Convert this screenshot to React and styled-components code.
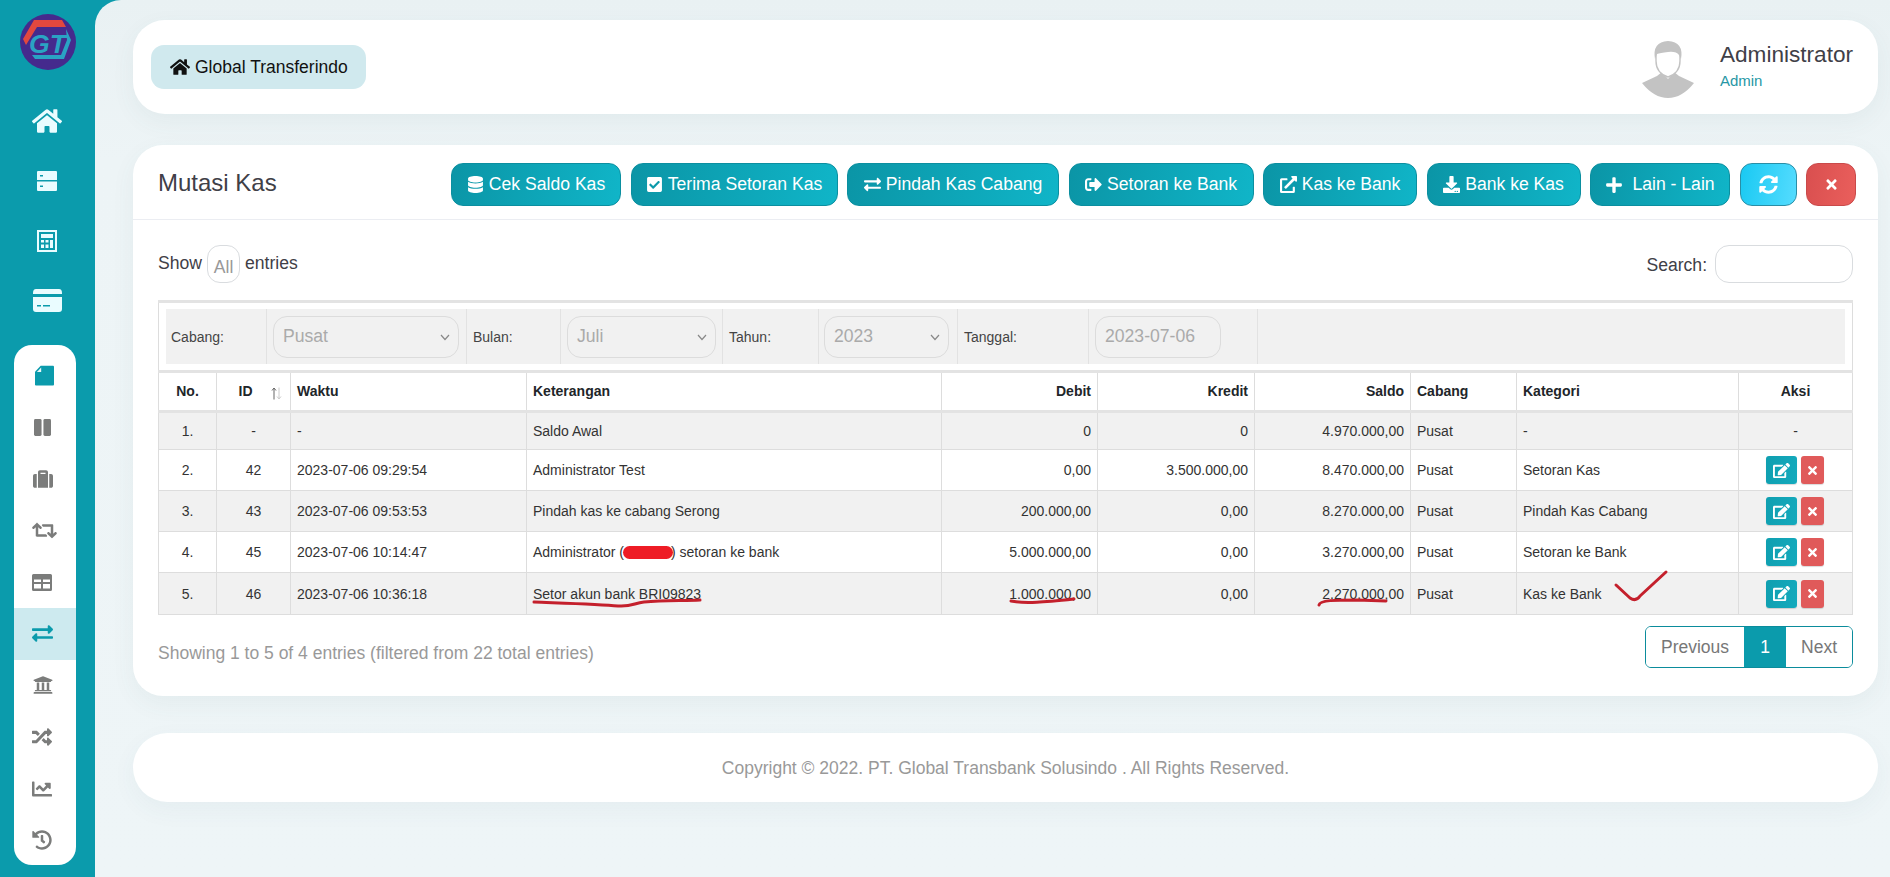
import React from "react";
import styled, { createGlobalStyle } from "styled-components";
import {
  FaHome, FaSuitcase, FaRetweet, FaExchangeAlt, FaUniversity, FaRandom, FaChartLine, FaHistory,
  FaDatabase, FaCheckSquare, FaSignOutAlt, FaExternalLinkAlt, FaDownload, FaPlus, FaSyncAlt, FaTimes, FaEdit,
} from "react-icons/fa";

const Global = createGlobalStyle`
  html, body { margin: 0; padding: 0; height: 877px; overflow: hidden; background: #eef5f7; }
  * { box-sizing: border-box; }
  body { font-family: "Liberation Sans", Arial, sans-serif; color: #333; }
`;

const teal = "#0b9bac";

const Page = styled.div`
  position: relative;
  display: flex;
  width: 1890px;
  height: 877px;
  background: ${teal};
`;
const Sidebar = styled.aside`
  width: 95px;
  flex: none;
  display: flex;
  flex-direction: column;
`;
const LogoBox = styled.div`
  height: 90px;
  padding: 13px 0 0 19px;
`;
const TopNav = styled.nav`
  display: flex;
  flex-direction: column;
`;
const TopItem = styled.div`
  height: 60px;
  display: flex;
  align-items: center;
  justify-content: center;
  color: #eafcff;
  padding: 1px 1px 0 0;
`;
const Panel = styled.nav`
  margin: 15px 0 0 14px;
  width: 62px;
  height: 520px;
  background: #fff;
  border-radius: 18px;
  padding-top: 5px;
  display: flex;
  flex-direction: column;
  overflow: hidden;
`;
const PanelItem = styled.div`
  height: 51.6px;
  flex: none;
  display: flex;
  align-items: center;
  justify-content: center;
  padding-right: ${(p) => p.$right ?? 6}px;
  color: ${(p) => (p.$teal ? teal : "#7b7c7b")};
  background: ${(p) => (p.$active ? "#cdeaef" : "transparent")};
`;
const Main = styled.main`
  flex: 1;
  background: linear-gradient(180deg, #e9f1f3 0, #edf4f6 160px, #eef5f7 100%);
  border-top-left-radius: 26px;
  padding: 20px 13px 0 38px;
`;
const HeaderCard = styled.header`
  height: 94px;
  background: #fff;
  border-radius: 32px;
  box-shadow: 0 8px 24px rgba(60, 100, 110, 0.06);
  display: flex;
  align-items: center;
  justify-content: space-between;
  padding: 0 25px 0 18px;
`;
const HomePill = styled.div`
  width: 215px;
  height: 44px;
  background: #d0e9ee;
  border-radius: 13px;
  display: flex;
  align-items: center;
  padding-left: 19px;
  gap: 5px;
  color: #111;
  font-size: 17.5px;
`;
const Profile = styled.div`
  display: flex;
  align-items: center;
  gap: 26px;
`;
const ProfileText = styled.div`
  display: flex;
  flex-direction: column;
  gap: 5px;
  padding-bottom: 3px;
`;
const ProfileName = styled.div`
  font-size: 22.6px;
  color: #3f4047;
  line-height: 26px;
`;
const ProfileRole = styled.div`
  font-size: 15px;
  color: #2797a5;
  line-height: 16px;
`;
const Card = styled.section`
  margin-top: 31px;
  background: #fff;
  border-radius: 30px;
  box-shadow: 0 8px 24px rgba(60, 100, 110, 0.06);
`;
const CardHead = styled.div`
  height: 75px;
  border-bottom: 1px solid #ebedf2;
  display: flex;
  align-items: center;
  justify-content: space-between;
  padding: 5px 22px 0 25px;
`;
const Title = styled.h1`
  margin: 0 0 4px;
  font-size: 24px;
  font-weight: 400;
  color: #3f4047;
`;
const Toolbar = styled.div`
  display: flex;
  gap: 9.5px;
`;
const ActionButton = styled.button`
  height: 43px;
  width: ${(p) => p.$w}px;
  padding: 0;
  border-radius: 12px;
  border: 1px solid ${(p) => p.$edge || "#0b8fa0"};
  background: ${(p) => p.$bg || "linear-gradient(100deg, #0b95a6 0%, #10b5c8 100%)"};
  color: #fff;
  font: 400 17.6px "Liberation Sans", Arial, sans-serif;
  display: flex;
  align-items: center;
  justify-content: center;
  gap: ${(p) => p.$gap ?? 5}px;
  white-space: nowrap;
`;
const CardBody = styled.div`
  padding: 25px 25px 28px;
`;
const ControlRow = styled.div`
  height: 38px;
  display: flex;
  align-items: center;
  justify-content: space-between;
  font-size: 17.6px;
  color: #3f4047;
`;
const Inline = styled.div`
  display: flex;
  align-items: center;
  gap: 5px;
`;
const ShowText = styled.span`
  padding-bottom: 2px;
`;
const LengthBox = styled.div`
  width: 33px;
  height: 38px;
  border: 1px solid #d9dcdf;
  border-radius: 13px;
  color: #999;
  display: flex;
  align-items: flex-end;
  justify-content: center;
  padding-bottom: 5px;
  line-height: 20px;
`;
const SearchLabel = styled.span`
  position: relative;
  top: 1px;
  margin-right: 3px;
`;
const SearchBox = styled.div`
  width: 138px;
  height: 38px;
  border: 1px solid #d9dcdf;
  border-radius: 14px;
  background: #fff;
`;
const Table = styled.table`
  margin-top: 17px;
  width: 1694px;
  table-layout: fixed;
  border-collapse: collapse;
  font-size: 14px;
  color: #333;
`;
const FilterCell = styled.th`
  padding: 6px 7px 6px;
  border: 1px solid #ddd;
  border-top: 3px solid #e3e3e3;
  border-bottom: 3px solid #e3e3e3;
  height: 70px;
`;
const FilterBar = styled.div`
  display: grid;
  grid-template-columns: 100px 200px 94px 162px 96px 139px 131px 169px 1fr;
  height: 55px;
  background: #f1f1f1;
`;
const FilterPart = styled.div`
  display: flex;
  align-items: center;
  padding-left: ${(p) => p.$pad ?? 6}px;
  border-left: ${(p) => (p.$first ? "none" : "1px solid #e2e2e2")};
  font-size: 14px;
  font-weight: 400;
  color: #444;
`;
const FilterSelect = styled.div`
  width: ${(p) => p.$w}px;
  height: 42px;
  border: 1px solid #dcdcdc;
  border-radius: 14px;
  display: flex;
  align-items: center;
  justify-content: space-between;
  padding: 0 6px 0 9px;
  font-size: 17.6px;
  color: #aaa;
`;
const Head = styled.th`
  height: 40px;
  padding: 0 ${(p) => p.$right ?? 6}px 2px 6px;
  font-weight: 700;
  color: #212529;
  text-align: ${(p) => p.$align || "left"};
  border-left: 1px solid #ddd;
  border-right: 1px solid #ddd;
  border-bottom: 3px solid #e3e3e3;
  position: relative;
`;
const SortMark = styled.svg`
  position: absolute;
  right: 8px;
  top: 14px;
`;
const Row = styled.tr`
  background: ${(p) => (p.$odd ? "#f1f1f1" : "#fff")};
`;
const Cell = styled.td`
  height: ${(p) => p.$h}px;
  padding: 0 6px;
  text-align: ${(p) => p.$align || "left"};
  border: 1px solid #ddd;
`;
const Redacted = styled.span`
  display: inline-block;
  width: 47px;
`;
const RowActions = styled.div`
  display: flex;
  justify-content: center;
  gap: 4px;
  padding-right: 2px;
`;
const IconButton = styled.div`
  width: ${(p) => p.$w}px;
  height: 28px;
  border-radius: 3px;
  display: flex;
  align-items: center;
  justify-content: center;
  color: #fff;
  background: ${(p) => p.$bg};
  box-shadow: 0 1px 1px rgba(0, 0, 0, 0.15);
`;
const BottomRow = styled.div`
  margin-top: 11px;
  display: flex;
  justify-content: space-between;
  align-items: center;
  font-size: 17.5px;
  color: #999;
`;
const InfoText = styled.div`
  margin-top: 12px;
`;
const Pager = styled.div`
  display: flex;
  height: 42px;
  border: 1px solid #0b8c9c;
  border-radius: 6px;
  overflow: hidden;
`;
const PageLink = styled.div`
  width: ${(p) => p.$w}px;
  display: flex;
  align-items: center;
  justify-content: center;
  color: ${(p) => (p.$active ? "#fff" : "#777")};
  background: ${(p) => (p.$active ? teal : "#fff")};
`;
const Footer = styled.footer`
  margin-top: 37px;
  height: 69px;
  border-radius: 35px;
  background: #fff;
  box-shadow: 0 8px 24px rgba(60, 100, 110, 0.05);
  display: flex;
  align-items: center;
  justify-content: center;
  padding-top: 1px;
  font-size: 17.5px;
  color: #999;
`;
const Ink = styled.svg`
  position: absolute;
  left: 0;
  top: 0;
  width: 1890px;
  height: 877px;
  pointer-events: none;
`;

const Logo = () => (
  <svg width="58" height="58" viewBox="0 0 58 58">
    <circle cx="29" cy="29" r="28" fill="#452a8d" />
    <path d="M15 7 L43 7 L47 14 L18 14 L7 32 L4 26 Z" fill="#e2483f" />
    <text x="10" y="40" fontFamily="Liberation Sans" fontWeight="700" fontStyle="italic" fontSize="26" fill="#2aa3c4" textLength="37" lengthAdjust="spacingAndGlyphs">GT</text>
    <path d="M47 16 L52 27 L45 46 L16 46 L13 42 L42 42 L48 27 Z" fill="#2aa3c4" />
  </svg>
);
const ServerIcon = () => (
  <svg width="20" height="20" viewBox="0 0 20 20">
    <path fillRule="evenodd" fill="currentColor" d="M0 1 Q0 0 1 0 H19 Q20 0 20 1 V9 H0 Z M6 4 H3 V5.5 H6 Z M0 10.5 H20 V19 Q20 20 19 20 H1 Q0 20 0 19 Z M6 14.5 H3 V16 H6 Z" />
  </svg>
);
const CalcIcon = () => (
  <svg width="20" height="22" viewBox="0 0 20 22">
    <path fillRule="evenodd" fill="currentColor" d="M0 0 H20 V22 H0 Z M2 2 V20 H18 V2 Z M4 4 H16 V8 H4 Z M4 10 H7 V12.5 H4 Z M8.5 10 H11.5 V12.5 H8.5 Z M13 10 H16 V18 H13 Z M4 14.5 H7 V18 H4 Z M8.5 14.5 H11.5 V18 H8.5 Z" />
  </svg>
);
const CardIcon = () => (
  <svg width="29" height="23" viewBox="0 0 29 23">
    <path fill="currentColor" d="M0 4 Q0 0 3 0 H26 Q29 0 29 4 V5 H0 Z" />
    <path fillRule="evenodd" fill="currentColor" d="M0 8 H29 V20 Q29 23 26 23 H3 Q0 23 0 20 Z M4 16 H8 V17.5 H4 Z M10 16 H17 V17.5 H10 Z" />
  </svg>
);
const NoteIcon = () => (
  <svg width="19" height="21" viewBox="0 0 20 21">
    <path fill="currentColor" d="M6 0.3 H19 Q20 0.3 20 1.3 V20 Q20 21 19 21 H1 Q0 21 0 20 V6.5 Z" />
    <path fill="#eaf7f9" d="M2 6.8 L6.5 2 V6.8 Z" />
  </svg>
);
const ColumnsIcon = () => (
  <svg width="17" height="17" viewBox="0 0 18 18">
    <rect x="0" y="0" width="8" height="18" rx="1.5" fill="currentColor" />
    <rect x="10" y="0" width="8" height="18" rx="1.5" fill="currentColor" />
  </svg>
);
const TableIcon = () => (
  <svg width="20" height="17" viewBox="0 0 20 17">
    <path fillRule="evenodd" fill="currentColor" d="M1.5 0 H18.5 Q20 0 20 1.5 V15.5 Q20 17 18.5 17 H1.5 Q0 17 0 15.5 V1.5 Q0 0 1.5 0 Z M2 5.5 V8 H9 V5.5 Z M11 5.5 V8 H18 V5.5 Z M2 10 V14.5 H9 V10 Z M11 10 V14.5 H18 V10 Z" />
  </svg>
);
const Avatar = () => (
  <svg width="52" height="64" viewBox="0 0 52 64">
    <path fill="#c3c3c3" d="M0 48 L15 41 L20 37 L26 44 L32 37 L37 41 L52 48 Q40 63 26 63 Q12 63 0 48 Z" />
    <path fill="#fff" stroke="#c3c3c3" strokeWidth="1.4" d="M14 20 Q14 8 26 8 Q38 8 38 20 V26 Q38 38 26 42 Q14 38 14 26 Z" />
    <path fill="#c3c3c3" d="M13 24 Q10 7 26 6 Q42 7 39 24 L37 20 Q34 16 26 17 Q18 18 15 19 Z" />
  </svg>
);
const Chevron = () => (
  <svg width="14" height="14" viewBox="0 0 14 14">
    <path d="M3 5 L7 9.5 L11 5" fill="none" stroke="#888" strokeWidth="1.2" />
  </svg>
);
const SortArrows = () => (
  <SortMark width="11" height="13" viewBox="0 0 11 13">
    <path d="M3 12.5 V1 M1 3.5 L3 1 L5 3.5" fill="none" stroke="#666" strokeWidth="1" />
    <path d="M8 0.5 V12 M6 9.5 L8 12 L10 9.5" fill="none" stroke="#ccc" strokeWidth="1" />
  </SortMark>
);

const rows = [
  ["1.", "-", "-", "Saldo Awal", "0", "0", "4.970.000,00", "Pusat", "-", null],
  ["2.", "42", "2023-07-06 09:29:54", "Administrator Test", "0,00", "3.500.000,00", "8.470.000,00", "Pusat", "Setoran Kas", 1],
  ["3.", "43", "2023-07-06 09:53:53", "Pindah kas ke cabang Serong", "200.000,00", "0,00", "8.270.000,00", "Pusat", "Pindah Kas Cabang", 1],
  ["4.", "45", "2023-07-06 10:14:47", <>Administrator (<Redacted />) setoran ke bank</>, "5.000.000,00", "0,00", "3.270.000,00", "Pusat", "Setoran ke Bank", 1],
  ["5.", "46", "2023-07-06 10:36:18", "Setor akun bank BRI09823", "1.000.000,00", "0,00", "2.270.000,00", "Pusat", "Kas ke Bank", 1],
];
const heights = [38, 41, 41, 41, 42];
const widths = [58, 74, 236, 415, 156, 157, 156, 106, 222, 114];
const columns = [
  ["No.", "center"], ["ID", "center", 22], ["Waktu"], ["Keterangan"], ["Debit", "right"], ["Kredit", "right"],
  ["Saldo", "right"], ["Cabang"], ["Kategori"], ["Aksi", "center"],
];
const buttons = [
  [FaDatabase, "Cek Saldo Kas", 17, 170, 5],
  [FaCheckSquare, "Terima Setoran Kas", 17, 207, 5],
  [FaExchangeAlt, "Pindah Kas Cabang", 17, 212, 5],
  [FaSignOutAlt, "Setoran ke Bank", 17, 185, 5],
  [FaExternalLinkAlt, "Kas ke Bank", 17, 154, 5],
  [FaDownload, "Bank ke Kas", 17, 154, 5],
  [FaPlus, "Lain - Lain", 18, 140, 9],
];
const panel = [
  [<NoteIcon />, { $teal: true, $right: 1 }],
  [<ColumnsIcon />],
  [<FaSuitcase size={20} />, { $right: 4 }],
  [<FaRetweet size={25} />, { $right: 1 }],
  [<TableIcon />],
  [<FaExchangeAlt size={21} />, { $teal: true, $active: true }],
  [<FaUniversity size={20} />, { $right: 4 }],
  [<FaRandom size={20} />],
  [<FaChartLine size={20} />],
  [<FaHistory size={20} />],
];

export default function App() {
  return (
    <Page>
      <Global />
      <Sidebar>
        <LogoBox><Logo /></LogoBox>
        <TopNav>
          <TopItem><FaHome size={30} /></TopItem>
          <TopItem><ServerIcon /></TopItem>
          <TopItem><CalcIcon /></TopItem>
          <TopItem><CardIcon /></TopItem>
        </TopNav>
        <Panel>
          {panel.map(([icon, props], i) => (
            <PanelItem key={i} {...props}>{icon}</PanelItem>
          ))}
        </Panel>
      </Sidebar>
      <Main>
        <HeaderCard>
          <HomePill><FaHome size={20} />Global Transferindo</HomePill>
          <Profile>
            <Avatar />
            <ProfileText>
              <ProfileName>Administrator</ProfileName>
              <ProfileRole>Admin</ProfileRole>
            </ProfileText>
          </Profile>
        </HeaderCard>
        <Card>
          <CardHead>
            <Title>Mutasi Kas</Title>
            <Toolbar>
              {buttons.map(([Icon, label, size, w, gap]) => (
                <ActionButton key={label} $w={w} $gap={gap}>
                  <Icon size={size} />
                  {label}
                </ActionButton>
              ))}
              <ActionButton $w={57} $edge="#2a8ea6" $bg="linear-gradient(100deg, #19c9f2 0%, #55dcff 100%)">
                <FaSyncAlt size={19} />
              </ActionButton>
              <ActionButton $w={50} $edge="#c94a4a" $bg="linear-gradient(100deg, #d94f4f 0%, #ea5f5c 100%)">
                <FaTimes size={15} />
              </ActionButton>
            </Toolbar>
          </CardHead>
          <CardBody>
            <ControlRow>
              <Inline><ShowText>Show</ShowText> <LengthBox>All</LengthBox> <ShowText>entries</ShowText></Inline>
              <Inline><SearchLabel>Search:</SearchLabel><SearchBox /></Inline>
            </ControlRow>
            <Table>
              <colgroup>
                {widths.map((w, i) => <col key={i} style={{ width: w }} />)}
              </colgroup>
              <thead>
                <tr>
                  <FilterCell colSpan={10}>
                    <FilterBar>
                      <FilterPart $first $pad={5}>Cabang:</FilterPart>
                      <FilterPart><FilterSelect $w={186}>Pusat<Chevron /></FilterSelect></FilterPart>
                      <FilterPart>Bulan:</FilterPart>
                      <FilterPart><FilterSelect $w={149}>Juli<Chevron /></FilterSelect></FilterPart>
                      <FilterPart>Tahun:</FilterPart>
                      <FilterPart $pad={5}><FilterSelect $w={125}>2023<Chevron /></FilterSelect></FilterPart>
                      <FilterPart>Tanggal:</FilterPart>
                      <FilterPart><FilterSelect $w={126}>2023-07-06</FilterSelect></FilterPart>
                      <FilterPart />
                    </FilterBar>
                  </FilterCell>
                </tr>
                <tr>
                  {columns.map(([label, align, right]) => (
                    <Head key={label} $align={align} $right={right}>
                      {label}
                      {label === "ID" && <SortArrows />}
                    </Head>
                  ))}
                </tr>
              </thead>
              <tbody>
                {rows.map((r, i) => (
                  <Row key={i} $odd={i % 2 === 0}>
                    {r.slice(0, 9).map((v, j) => (
                      <Cell key={j} $h={heights[i]} $align={columns[j][1]}>{v}</Cell>
                    ))}
                    <Cell $h={heights[i]} $align="center">
                      {r[9] ? (
                        <RowActions>
                          <IconButton $w={31} $bg="linear-gradient(100deg, #0f9fb0, #14aabd)"><FaEdit size={17} /></IconButton>
                          <IconButton $w={23} $bg="#e05a5a"><FaTimes size={13} /></IconButton>
                        </RowActions>
                      ) : "-"}
                    </Cell>
                  </Row>
                ))}
              </tbody>
            </Table>
            <BottomRow>
              <InfoText>Showing 1 to 5 of 4 entries (filtered from 22 total entries)</InfoText>
              <Pager>
                <PageLink $w={98}>Previous</PageLink>
                <PageLink $w={42} $active>1</PageLink>
                <PageLink $w={66}>Next</PageLink>
              </Pager>
            </BottomRow>
          </CardBody>
        </Card>
        <Footer>Copyright © 2022. PT. Global Transbank Solusindo . All Rights Reserved.</Footer>
      </Main>
      <Ink viewBox="0 0 1890 877">
        <g fill="none" stroke="#c4202c" strokeWidth="3" strokeLinecap="round" strokeLinejoin="round">
          <path d="M534 602 C560 603 600 604 618 606 C632 607 634 603 644 602 C665 600 685 601 700 600" />
          <path d="M1011 601 C1025 604 1045 602 1074 599" />
          <path d="M1319 605 C1320 600 1335 600 1357 600 L1386 601" />
          <path d="M1616 585 L1630 598 Q1636 602 1640 596 L1666 572" />
        </g>
        <rect x="623" y="546" width="50" height="13" rx="6.5" fill="#ee1c25" />
      </Ink>
    </Page>
  );
}
